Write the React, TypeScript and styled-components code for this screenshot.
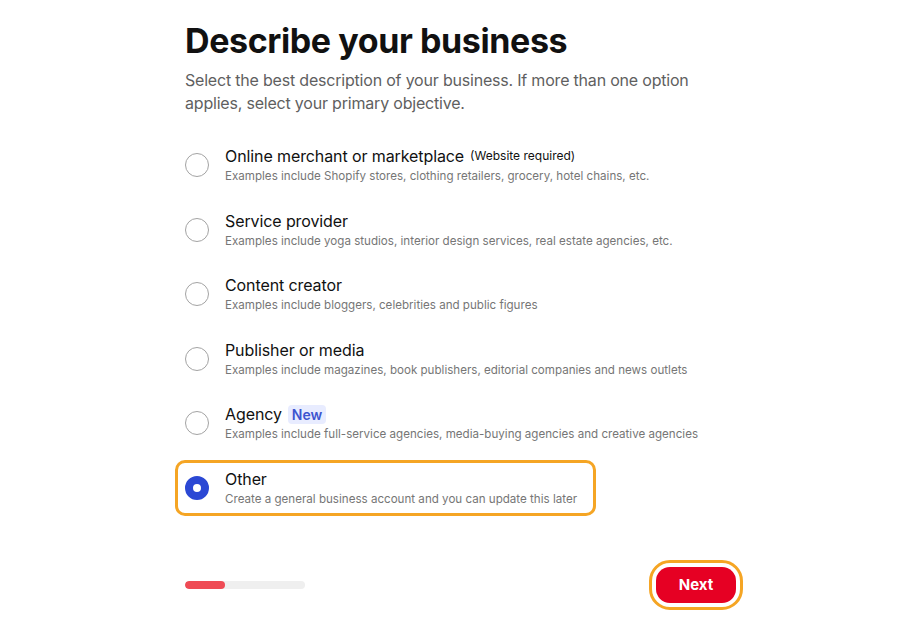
import React, { useState } from 'react';
import styled, { createGlobalStyle } from 'styled-components';

const GlobalStyle = createGlobalStyle`
	html, body {
		margin: 0;
		padding: 0;
		background: #ffffff;
	}
	body {
		font-family: Inter, 'Noto Sans', 'Liberation Sans', sans-serif;
		color: #111111;
		-webkit-font-smoothing: antialiased;
	}
`;

const Page = styled.div`
	box-sizing: border-box;
	width: 920px;
	height: 625px;
	padding: 20px 0 0 185px;
`;

const Column = styled.div`
	width: 551px;
	display: flex;
	flex-direction: column;
`;

const Heading = styled.h1`
	margin: 0;
	font-size: 34px;
	line-height: 42px;
	font-weight: 700;
	letter-spacing: -0.4px;
	color: #111111;
`;

const Subtitle = styled.p`
	margin: 7px 0 0;
	width: 520px;
	font-size: 16px;
	line-height: 23px;
	letter-spacing: -0.2px;
	color: #5f5f5f;
`;

const OptionList = styled.div`
	margin: 22px 0 0 -10px;
	display: flex;
	flex-direction: column;
	align-items: flex-start;
	gap: 8.6px;
`;

const Option = styled.label<{ $active: boolean }>`
	box-sizing: border-box;
	display: flex;
	align-items: center;
	gap: 16px;
	padding: 5px 16px 5px 7px;
	border: 3px solid ${(p) => (p.$active ? '#f5a524' : 'transparent')};
	border-radius: 10px;
	cursor: pointer;
`;

const Radio = styled.span<{ $checked: boolean }>`
	box-sizing: border-box;
	flex: none;
	width: 24px;
	height: 24px;
	border-radius: 50%;
	border: ${(p) => (p.$checked ? '8px solid #2b48d4' : '1px solid #a3a3a3')};
	background: #ffffff;
`;

const Texts = styled.div`
	display: flex;
	flex-direction: column;
`;

const TitleRow = styled.div`
	display: flex;
	align-items: center;
	gap: 6px;
	height: 22px;
`;

const Title = styled.span`
	font-size: 16px;
	line-height: 22px;
	letter-spacing: -0.1px;
	color: #111111;
`;

const Note = styled.span`
	font-size: 12px;
	color: #111111;
	position: relative;
	top: -1px;
`;

const Badge = styled.span`
	font-size: 14px;
	font-weight: 600;
	line-height: 19px;
	padding: 0 4px;
	border-radius: 4px;
	background: #e8ecff;
	color: #3d55cf;
`;

const Description = styled.span`
	font-size: 11.6px;
	line-height: 18px;
	color: #767676;
`;

const Footer = styled.div`
	margin-top: 51px;
	display: flex;
	align-items: center;
	justify-content: space-between;
`;

const Track = styled.div`
	width: 120px;
	height: 8px;
	border-radius: 4px;
	background: #efefef;
	overflow: hidden;
`;

const Fill = styled.div`
	height: 100%;
	border-radius: 4px;
	background: #ef4b55;
`;

const NextButton = styled.button`
	height: 36px;
	width: 80px;
	border: none;
	border-radius: 14px;
	background: #e60023;
	color: #ffffff;
	font-family: inherit;
	font-size: 15px;
	font-weight: 700;
	cursor: pointer;
	outline: 3px solid #f5a524;
	outline-offset: 4px;
`;

type Choice = {
	id: string;
	title: string;
	note?: string;
	badge?: string;
	description: string;
};

const choices: Choice[] = [
	{
		id: 'merchant',
		title: 'Online merchant or marketplace',
		note: '(Website required)',
		description: 'Examples include Shopify stores, clothing retailers, grocery, hotel chains, etc.',
	},
	{
		id: 'service',
		title: 'Service provider',
		description: 'Examples include yoga studios, interior design services, real estate agencies, etc.',
	},
	{
		id: 'creator',
		title: 'Content creator',
		description: 'Examples include bloggers, celebrities and public figures',
	},
	{
		id: 'publisher',
		title: 'Publisher or media',
		description: 'Examples include magazines, book publishers, editorial companies and news outlets',
	},
	{
		id: 'agency',
		title: 'Agency',
		badge: 'New',
		description: 'Examples include full-service agencies, media-buying agencies and creative agencies',
	},
	{
		id: 'other',
		title: 'Other',
		description: 'Create a general business account and you can update this later',
	},
];

const App = () => {
	const [selected, setSelected] = useState('other');
	const progress = 1 / 3;

	return (
		<>
			<GlobalStyle />
			<Page>
				<Column>
					<Heading>Describe your business</Heading>
					<Subtitle>
						Select the best description of your business. If more than one option applies, select
						your primary objective.
					</Subtitle>

					<OptionList>
						{choices.map((c) => (
							<Option key={c.id} $active={selected === c.id} onClick={() => setSelected(c.id)}>
								<Radio $checked={selected === c.id} />
								<Texts>
									<TitleRow>
										<Title>{c.title}</Title>
										{c.note && <Note>{c.note}</Note>}
										{c.badge && <Badge>{c.badge}</Badge>}
									</TitleRow>
									<Description>{c.description}</Description>
								</Texts>
							</Option>
						))}
					</OptionList>

					<Footer>
						<Track>
							<Fill style={{ width: `${progress * 100}%` }} />
						</Track>
						<NextButton>Next</NextButton>
					</Footer>
				</Column>
			</Page>
		</>
	);
};

export default App;
